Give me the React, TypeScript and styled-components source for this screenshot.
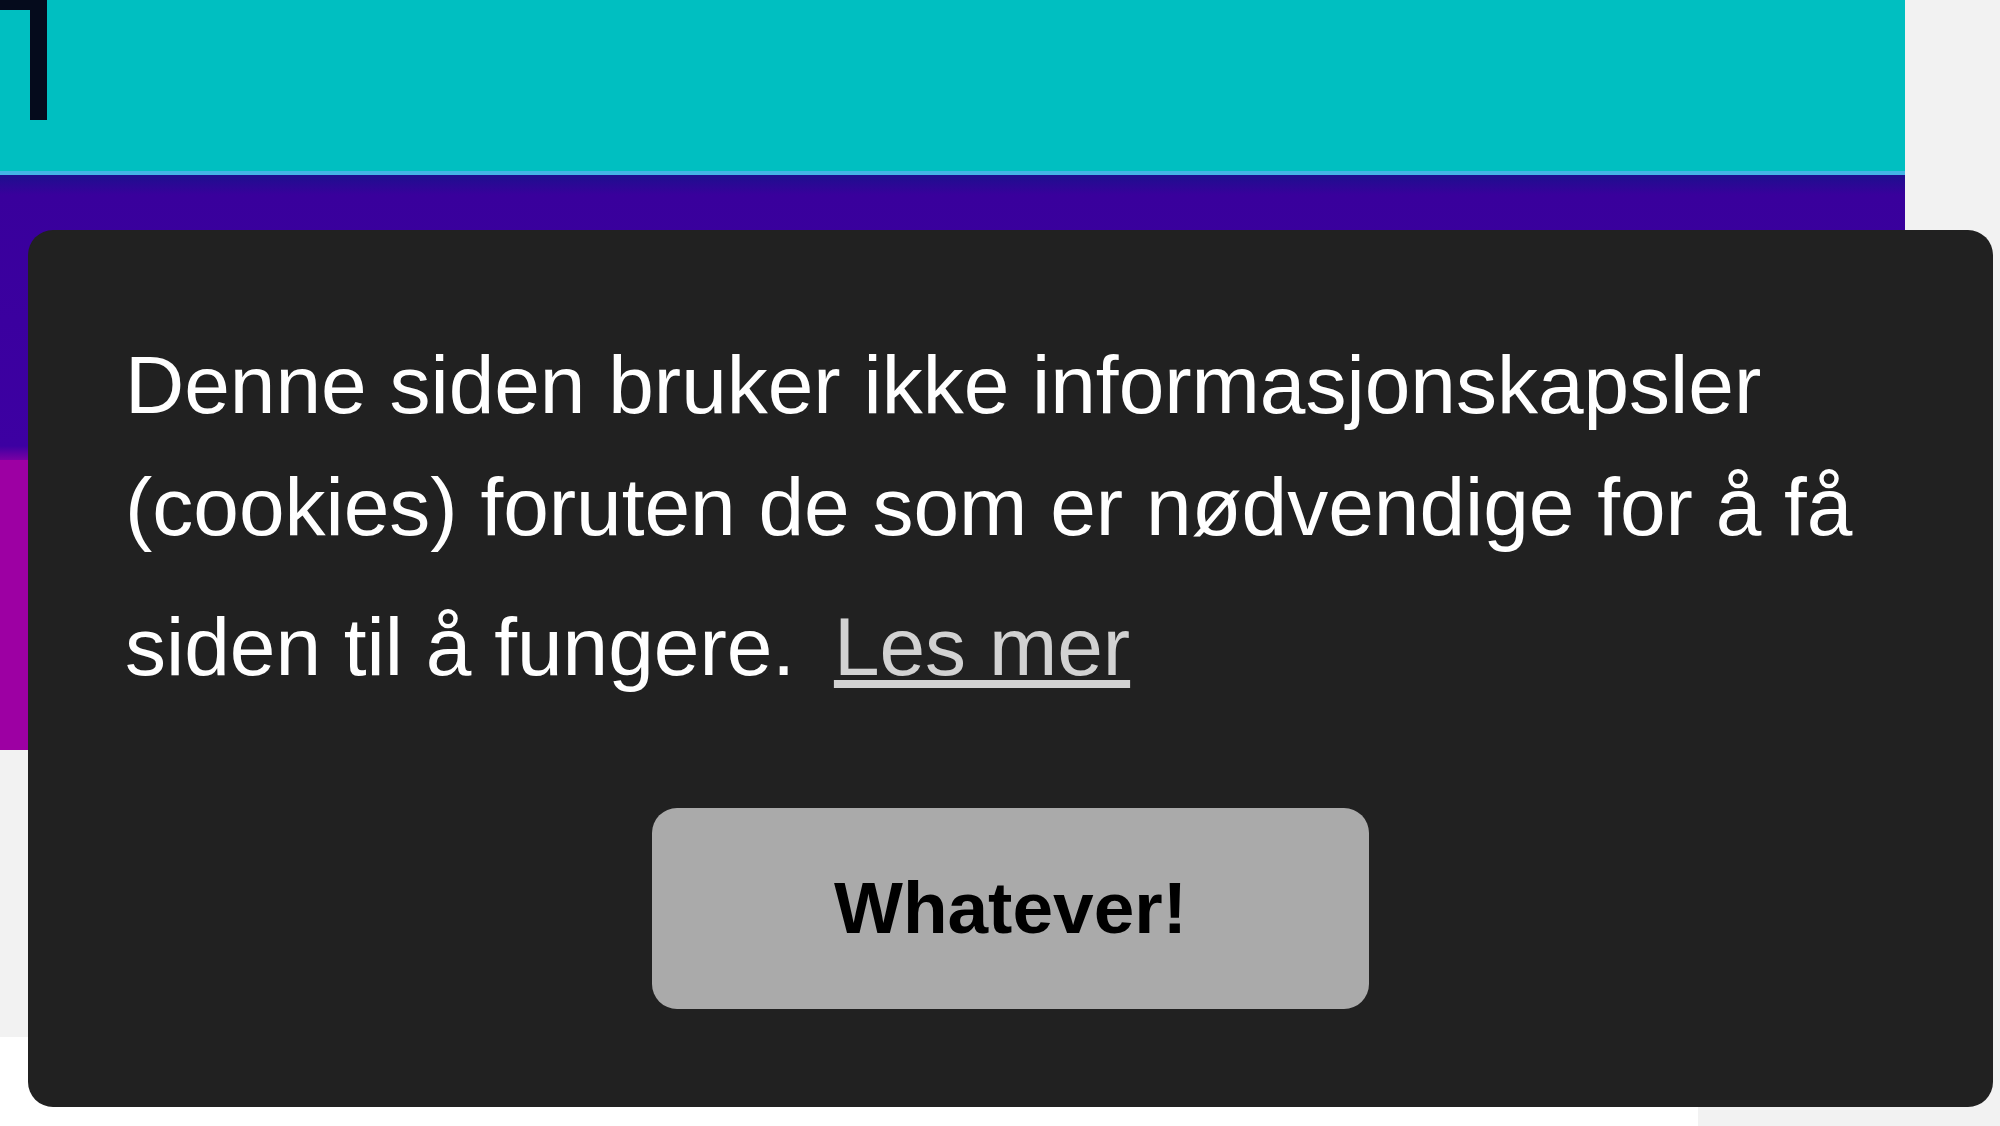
import * as React from 'react';
import styled, { createGlobalStyle } from 'styled-components';

const GlobalStyle = createGlobalStyle`
  html, body {
    margin: 0;
    padding: 0;
    background: #ffffff;
  }
  body {
    font-family: 'Liberation Sans', Arial, Helvetica, sans-serif;
  }
`;

const App: React.FC = () => {
  return (
    <>
      <GlobalStyle />
      <Page>
        <Main>
          <Stripe $height={171} $background="#00bfc1">
            <Mark width="47" height="120" viewBox="0 0 47 120">
              <path d="M0 0 H47 V120 H30 V10 H0 Z" fill="#050b1c" />
            </Mark>
          </Stripe>
          <Stripe $height={4} $background="#43b4e6" />
          <Stripe
            $height={285}
            $background="linear-gradient(#1d0f8e 0, #39009c 20px, #3d00a2 calc(100% - 14px), #7a00a4 100%)"
          />
          <Stripe $height={290} $background="#9d00a3" />
          <Stripe $height={287} $background="#f2f2f2" />
          <Footer>
            <FooterBlock />
          </Footer>
        </Main>
        <Side />
      </Page>

      <CookieWindow role="dialog" aria-label="cookieconsent">
        <Message>
          Denne siden bruker ikke informasjonskapsler (cookies) foruten de som er nødvendige for å få
          siden til å fungere. <MoreLink href="#">Les mer</MoreLink>
        </Message>
        <Compliance>
          <DismissButton type="button">Whatever!</DismissButton>
        </Compliance>
      </CookieWindow>
    </>
  );
};

export default App;

const Page = styled.div`
  display: grid;
  grid-template-columns: 1905px 1fr;
  min-height: 1126px;
`;

const Main = styled.main`
  display: flex;
  flex-direction: column;
`;

const Stripe = styled.div<{ $height: number; $background: string }>`
  height: ${p => p.$height}px;
  background: ${p => p.$background};
  flex: none;
`;

const Mark = styled.svg`
  display: block;
`;

const Footer = styled.footer`
  flex: 1;
  display: flex;
  justify-content: flex-end;
  background: #ffffff;
`;

const FooterBlock = styled.div`
  width: 207px;
  background: #f2f2f2;
`;

const Side = styled.aside`
  background: #f2f2f2;
`;

const CookieWindow = styled.div`
  position: fixed;
  left: 28px;
  top: 230px;
  width: 1965px;
  box-sizing: border-box;
  padding: 94px 97px 98px;
  display: flex;
  flex-direction: column;
  background: #212121;
  color: #ffffff;
  border-radius: 25px;
  font-size: 82px;
  line-height: 121.5px;
`;

const Message = styled.span`
  display: block;
  margin-bottom: 81px;
`;

const MoreLink = styled.a`
  display: inline-block;
  padding: 19px 16px;
  color: inherit;
  opacity: 0.8;
  text-decoration: underline;
`;

const Compliance = styled.div`
  display: flex;
  justify-content: center;
`;

const DismissButton = styled.button`
  display: inline-flex;
  align-items: center;
  justify-content: center;
  min-width: 717px;
  height: 201px;
  padding: 0 58px;
  border: none;
  border-radius: 25px;
  background: #aaaaaa;
  color: #000000;
  font-family: inherit;
  font-size: 73px;
  font-weight: 700;
  line-height: 109.5px;
  white-space: nowrap;
  cursor: pointer;
`;
